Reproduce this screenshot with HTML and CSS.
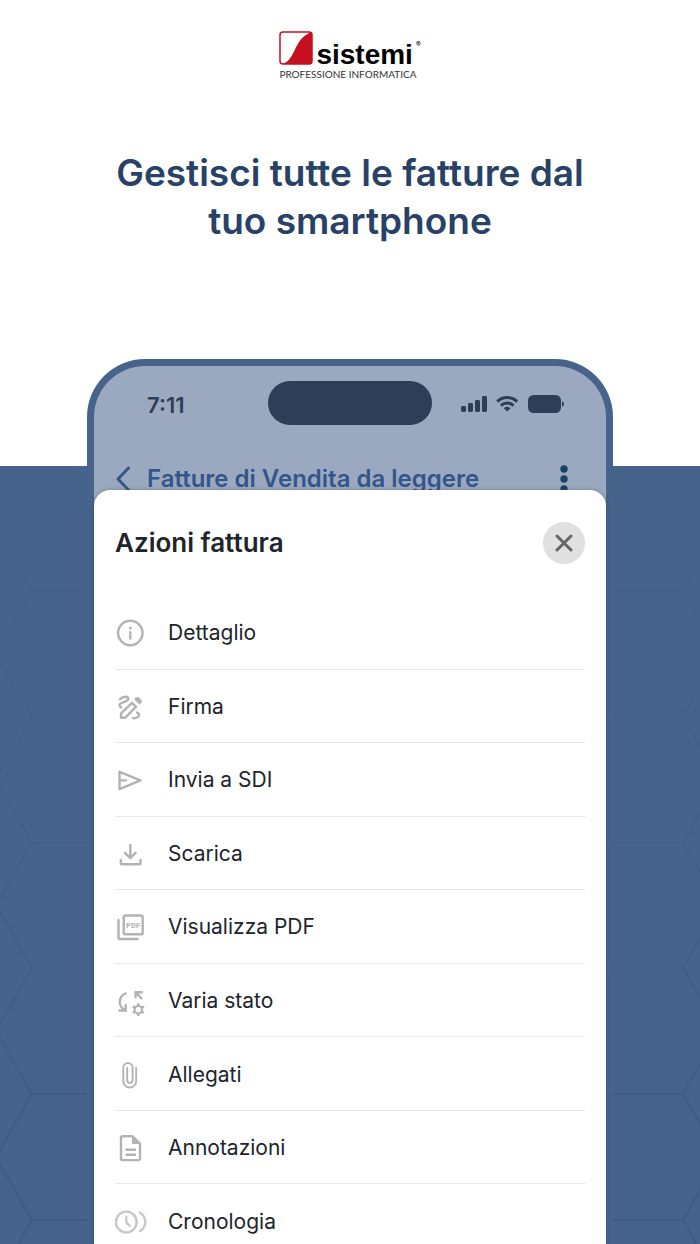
FILE: index.html
```html
<!DOCTYPE html>
<html lang="it">
<head>
<meta charset="utf-8">
<meta name="viewport" content="width=device-width, initial-scale=1">
<title>Sistemi – Gestisci tutte le fatture</title>
<link rel="stylesheet" href="styles.css">
</head>
<body>
<main class="poster">
  <div class="backdrop" aria-hidden="true">
    <svg class="hex hex-left" width="88" height="780" viewBox="0 0 88 780">
      <path d="M-4 62 32 125-4 188 32 251-4 313 32 377-4 439 32 502-4 565 32 628-4 691 32 754-4 817M32 125H87M32 251H87M32 377H87M32 502H87M32 628H87M32 754H87"/>
    </svg>
    <svg class="hex hex-right" width="88" height="780" viewBox="0 0 88 780">
      <path d="M107 62 71 125 107 188 71 251 107 313 71 377 107 439 71 502 107 565 71 628 107 691 71 754 107 817M1 125H71M1 251H71M1 377H71M1 502H71M1 628H71M1 754H71"/>
    </svg>
  </div>

  <header class="intro">
    <div class="brand">
      <div class="brand-row">
        <svg class="brand-mark" width="34" height="34" viewBox="0 0 34 34" aria-hidden="true">
          <rect x="1" y="1" width="32" height="32" rx="3" fill="#fff" stroke="#c4101f" stroke-width="1.5"/>
          <path d="M33 1v29a3 3 0 0 1-3 3H3C17 30 14 7 33 1z" fill="#c4101f"/>
        </svg>
        <span class="brand-name">sistemi</span><span class="brand-reg">®</span>
      </div>
      <span class="brand-tag">PROFESSIONE INFORMATICA</span>
    </div>
    <h1 class="headline">Gestisci tutte le fatture dal<br>tuo smartphone</h1>
  </header>

  <section class="phone">
    <div class="status">
      <span class="time">7:11</span>
      <span class="island"></span>
      <svg class="signals" width="104" height="20" viewBox="0 0 104 20" fill="#2f3e57" aria-hidden="true">
        <rect x="0" y="12" width="5" height="6" rx="1.4"/>
        <rect x="7" y="9" width="5" height="9" rx="1.4"/>
        <rect x="14" y="6" width="5" height="12" rx="1.4"/>
        <rect x="21" y="2" width="5" height="16" rx="1.4"/>
        <g fill="none" stroke="#2f3e57" stroke-width="3">
          <path d="M36.2 7.6a14.4 14.4 0 0 1 20 0"/>
          <path d="M39.9 11.6a9 9 0 0 1 12.600 0"/>
        </g>
        <path d="M46.200 17.500l-3.400-3.300a4.900 4.900 0 0 1 6.800 0z"/>
        <rect x="67" y="1" width="33" height="18" rx="5.500"/>
        <path d="M101 7.200c2.600.8 2.600 4.800 0 5.600z"/>
      </svg>
    </div>
    <div class="nav">
      <button class="icon-btn" aria-label="Indietro">
        <svg width="16" height="26" viewBox="0 0 16 26"><path d="M13.500 2 3 13l10.500 11" fill="none" stroke="#34558a" stroke-width="3" stroke-linecap="round" stroke-linejoin="round"/></svg>
      </button>
      <h2 class="nav-title">Fatture di Vendita da leggere</h2>
      <button class="icon-btn" aria-label="Altro">
        <svg width="8" height="28" viewBox="0 0 8 28" fill="#1b4163"><circle cx="4" cy="4" r="3.700"/><circle cx="4" cy="14" r="3.700"/><circle cx="4" cy="24" r="3.700"/></svg>
      </button>
    </div>

    <div class="sheet">
      <div class="sheet-head">
        <h2 class="sheet-title">Azioni fattura</h2>
        <button class="close" aria-label="Chiudi">
          <svg width="18" height="18" viewBox="0 0 18 18"><path d="M2 2l14 14M16 2 2 16" fill="none" stroke="#666" stroke-width="3" stroke-linecap="round"/></svg>
        </button>
      </div>
      <ul class="actions">
        <li><button class="action"><svg class="icon" viewBox="0 0 32 32"><circle cx="15.300" cy="16" r="12.200"/><path d="M15.300 15.200v6.300"/><circle class="solid" cx="15.300" cy="11" r="1.500"/></svg>Dettaglio</button></li>
        <li><button class="action"><svg class="icon" viewBox="0 0 32 32"><path d="M5 8.300C8 5 13 4.800 13.300 7.800 13.500 11 4.500 11 4.500 14c0 1.200.6 2 1.700 2.400"/><path d="M6 26.800v-4.300L17 11.800l4 4-11 11z" stroke-linejoin="round"/><path d="M22.200 21.600c3.800 2 1.600 5.400-4.200 5.600"/><path class="solid" d="M19 8.300 20.600 6.700c1.200-1 2.400-1 3.600 0l1.800 1.800c1.100 1.200 1.100 2.400.1 3.600l-1.500 1.500z"/></svg>Firma</button></li>
        <li><button class="action"><svg class="icon" viewBox="0 0 32 32"><path d="M4.500 7.800 25.500 16.400 4.500 25.200zM4.500 16.400H11" stroke-linejoin="round"/></svg>Invia a SDI</button></li>
        <li><button class="action"><svg class="icon" viewBox="0 0 32 32"><path d="M15.300 7v12.500M10 14.800l5.300 5.300 5.300-5.300M5.800 22v3.200q0 1 1 1h17.700q1 0 1-1V22"/></svg>Scarica</button></li>
        <li><button class="action"><svg class="icon" viewBox="0 0 32 32"><rect x="8.700" y="4.500" width="19" height="18.700" rx="1.500"/><path d="M3.500 9v17.500q0 1.500 1.500 1.500h17.500"/><text class="pdf" x="18.300" y="16.500">PDF</text></svg>Visualizza PDF</button></li>
        <li><button class="action"><svg class="icon" viewBox="0 0 32 32"><path d="M10.500 8.500C3 12 3 20.500 9.500 25M4.500 25.500h6.200v-5.500M20.600 12.500V7.300h6.200M21 7.700l5.500 5.800"/><circle cx="23.300" cy="24.700" r="3.700" stroke-width="2.200"/><path d="M23.300 20.600v-2.300M23.300 28.800v2.300M26.900 22.600l1.900-1.100M19.700 22.600l-1.900-1.100M26.900 26.800l1.900 1.100M19.700 26.800l-1.900 1.100" stroke-width="2.600" stroke-linecap="butt"/></svg>Varia stato</button></li>
        <li><button class="action"><svg class="icon" viewBox="0 0 32 32"><path d="M21.200 9v13a6.450 6.450 0 0 1-12.900 0V8.700a4.650 4.650 0 0 1 9.300 0v12.500a2.700 2.700 0 0 1-5.400 0V9" stroke-width="1.900"/></svg>Allegati</button></li>
        <li><button class="action"><svg class="icon" viewBox="0 0 32 32"><path d="M17.500 4.300H7.500q-1.500 0-1.500 1.500v20.800q0 1.500 1.500 1.500h16q1.500 0 1.500-1.500V11.500z" stroke-linejoin="round"/><path class="solid" d="M17 4v8h8.300z"/><path d="M11.500 17.800h8.500M11.500 22.800h8.500"/></svg>Annotazioni</button></li>
        <li><button class="action"><svg class="icon light" viewBox="0 0 32 32"><circle cx="11.300" cy="16" r="10.400"/><path d="M11.300 11v5.300l3.400 3.600M25 6.800c7 4.300 7 14.100 0 18.400"/></svg>Cronologia</button></li>
      </ul>
    </div>
  </section>
</main>
</body>
</html>
```
FILE: styles.css
```css
* { box-sizing: border-box; }

body {
  margin: 0;
  background: #fff;
  font-family: Inter, "Liberation Sans", sans-serif;
}

h1, h2, ul { margin: 0; padding: 0; }

button {
  margin: 0;
  padding: 0;
  border: 0;
  background: none;
  font: inherit;
  color: inherit;
  cursor: pointer;
}

svg { display: block; }

.poster {
  position: relative;
  display: flex;
  flex-direction: column;
  align-items: center;
  height: 100vh;
  overflow: hidden;
}

/* Blue lower area with a honeycomb that fades in downwards */
.backdrop {
  position: absolute;
  inset: 466px 0 0;
  background: #46638b;
}

.hex {
  position: absolute;
  top: 0;
  fill: none;
  stroke: #405b80;
  stroke-width: 2;
  mask-image: linear-gradient(transparent 10%, #000 90%);
}

.hex-left { left: 0; }
.hex-right { right: 0; }

.intro {
  display: flex;
  flex-direction: column;
  align-items: center;
  gap: 69px;
  padding-top: 31px;
}

.brand {
  display: flex;
  flex-direction: column;
  align-items: flex-start;
  gap: 3px;
}

.brand-row {
  display: flex;
  align-items: flex-start;
  gap: 3px;
}

.brand-name {
  font: 700 28px/48px "Liberation Sans", Arial, sans-serif;
  height: 34px;
  color: #000;
}

.brand-reg {
  font-size: 7px;
  line-height: 28px;
}

.brand-tag {
  font: 400 10px/12px Lato, sans-serif;
  color: #333;
}

.headline {
  color: #284267;
  font-size: 37px;
  font-weight: 600;
  line-height: 48px;
  text-align: center;
}

.phone {
  position: relative;
  flex: none;
  width: calc(100% - 174px);
  margin-top: 114px;
  border: solid #46638b;
  border-width: 7px 7px 0;
  border-radius: 58px 58px 0 0;
  background: #9aa9c0;
}

.status {
  display: grid;
  grid-template-columns: 1fr 164px 1fr;
  align-items: center;
  padding-top: 15px;
}

.time {
  padding: 3px 0 0 53px;
  color: #2f3e57;
  font-size: 22px;
  font-weight: 600;
}

.island {
  height: 44px;
  border-radius: 22px;
  background: #2f3e57;
}

.signals { margin: 2px 0 0 29px; }

.nav {
  display: flex;
  align-items: center;
  height: 36px;
  margin-top: 36px;
  padding: 0 38px 0 21px;
}

.nav-title {
  flex: 1;
  margin-left: 16px;
  color: #34558a;
  font-size: 24px;
  font-weight: 600;
  line-height: 32px;
}

.sheet {
  position: relative;
  margin-top: -7px;
  padding: 32px 21px 0;
  border-radius: 16px 16px 0 0;
  background: #fff;
  box-shadow: 0 0 4px rgba(40, 60, 90, 0.4);
  color: #20242b;
}

.sheet-head {
  display: flex;
  align-items: center;
  justify-content: space-between;
}

.sheet-title {
  font-size: 26px;
  font-weight: 600;
  line-height: 32px;
}

.close {
  display: grid;
  place-items: center;
  width: 42px;
  height: 42px;
  border-radius: 50%;
  background: #e0e0e0;
}

.actions {
  display: grid;
  grid-auto-rows: 1fr;
  min-height: 662px;
  margin-top: 32px;
  list-style: none;
}

.actions li {
  display: flex;
  border-bottom: 1px solid #e8e8e8;
}

.action {
  flex: 1;
  display: flex;
  align-items: center;
  gap: 21px;
  padding-top: 2px;
  font-size: 21px;
  line-height: 28px;
  text-align: left;
}

.icon {
  width: 32px;
  height: 32px;
  fill: none;
  stroke: #b3b3b3;
  stroke-width: 2.4;
  stroke-linecap: round;
}

.icon .solid { fill: #b3b3b3; stroke: none; }

.icon.light { stroke: #c8c8c8; }

.icon .pdf {
  fill: #b3b3b3;
  stroke: none;
  font: 700 8px "Liberation Mono", monospace;
  text-anchor: middle;
}
```
